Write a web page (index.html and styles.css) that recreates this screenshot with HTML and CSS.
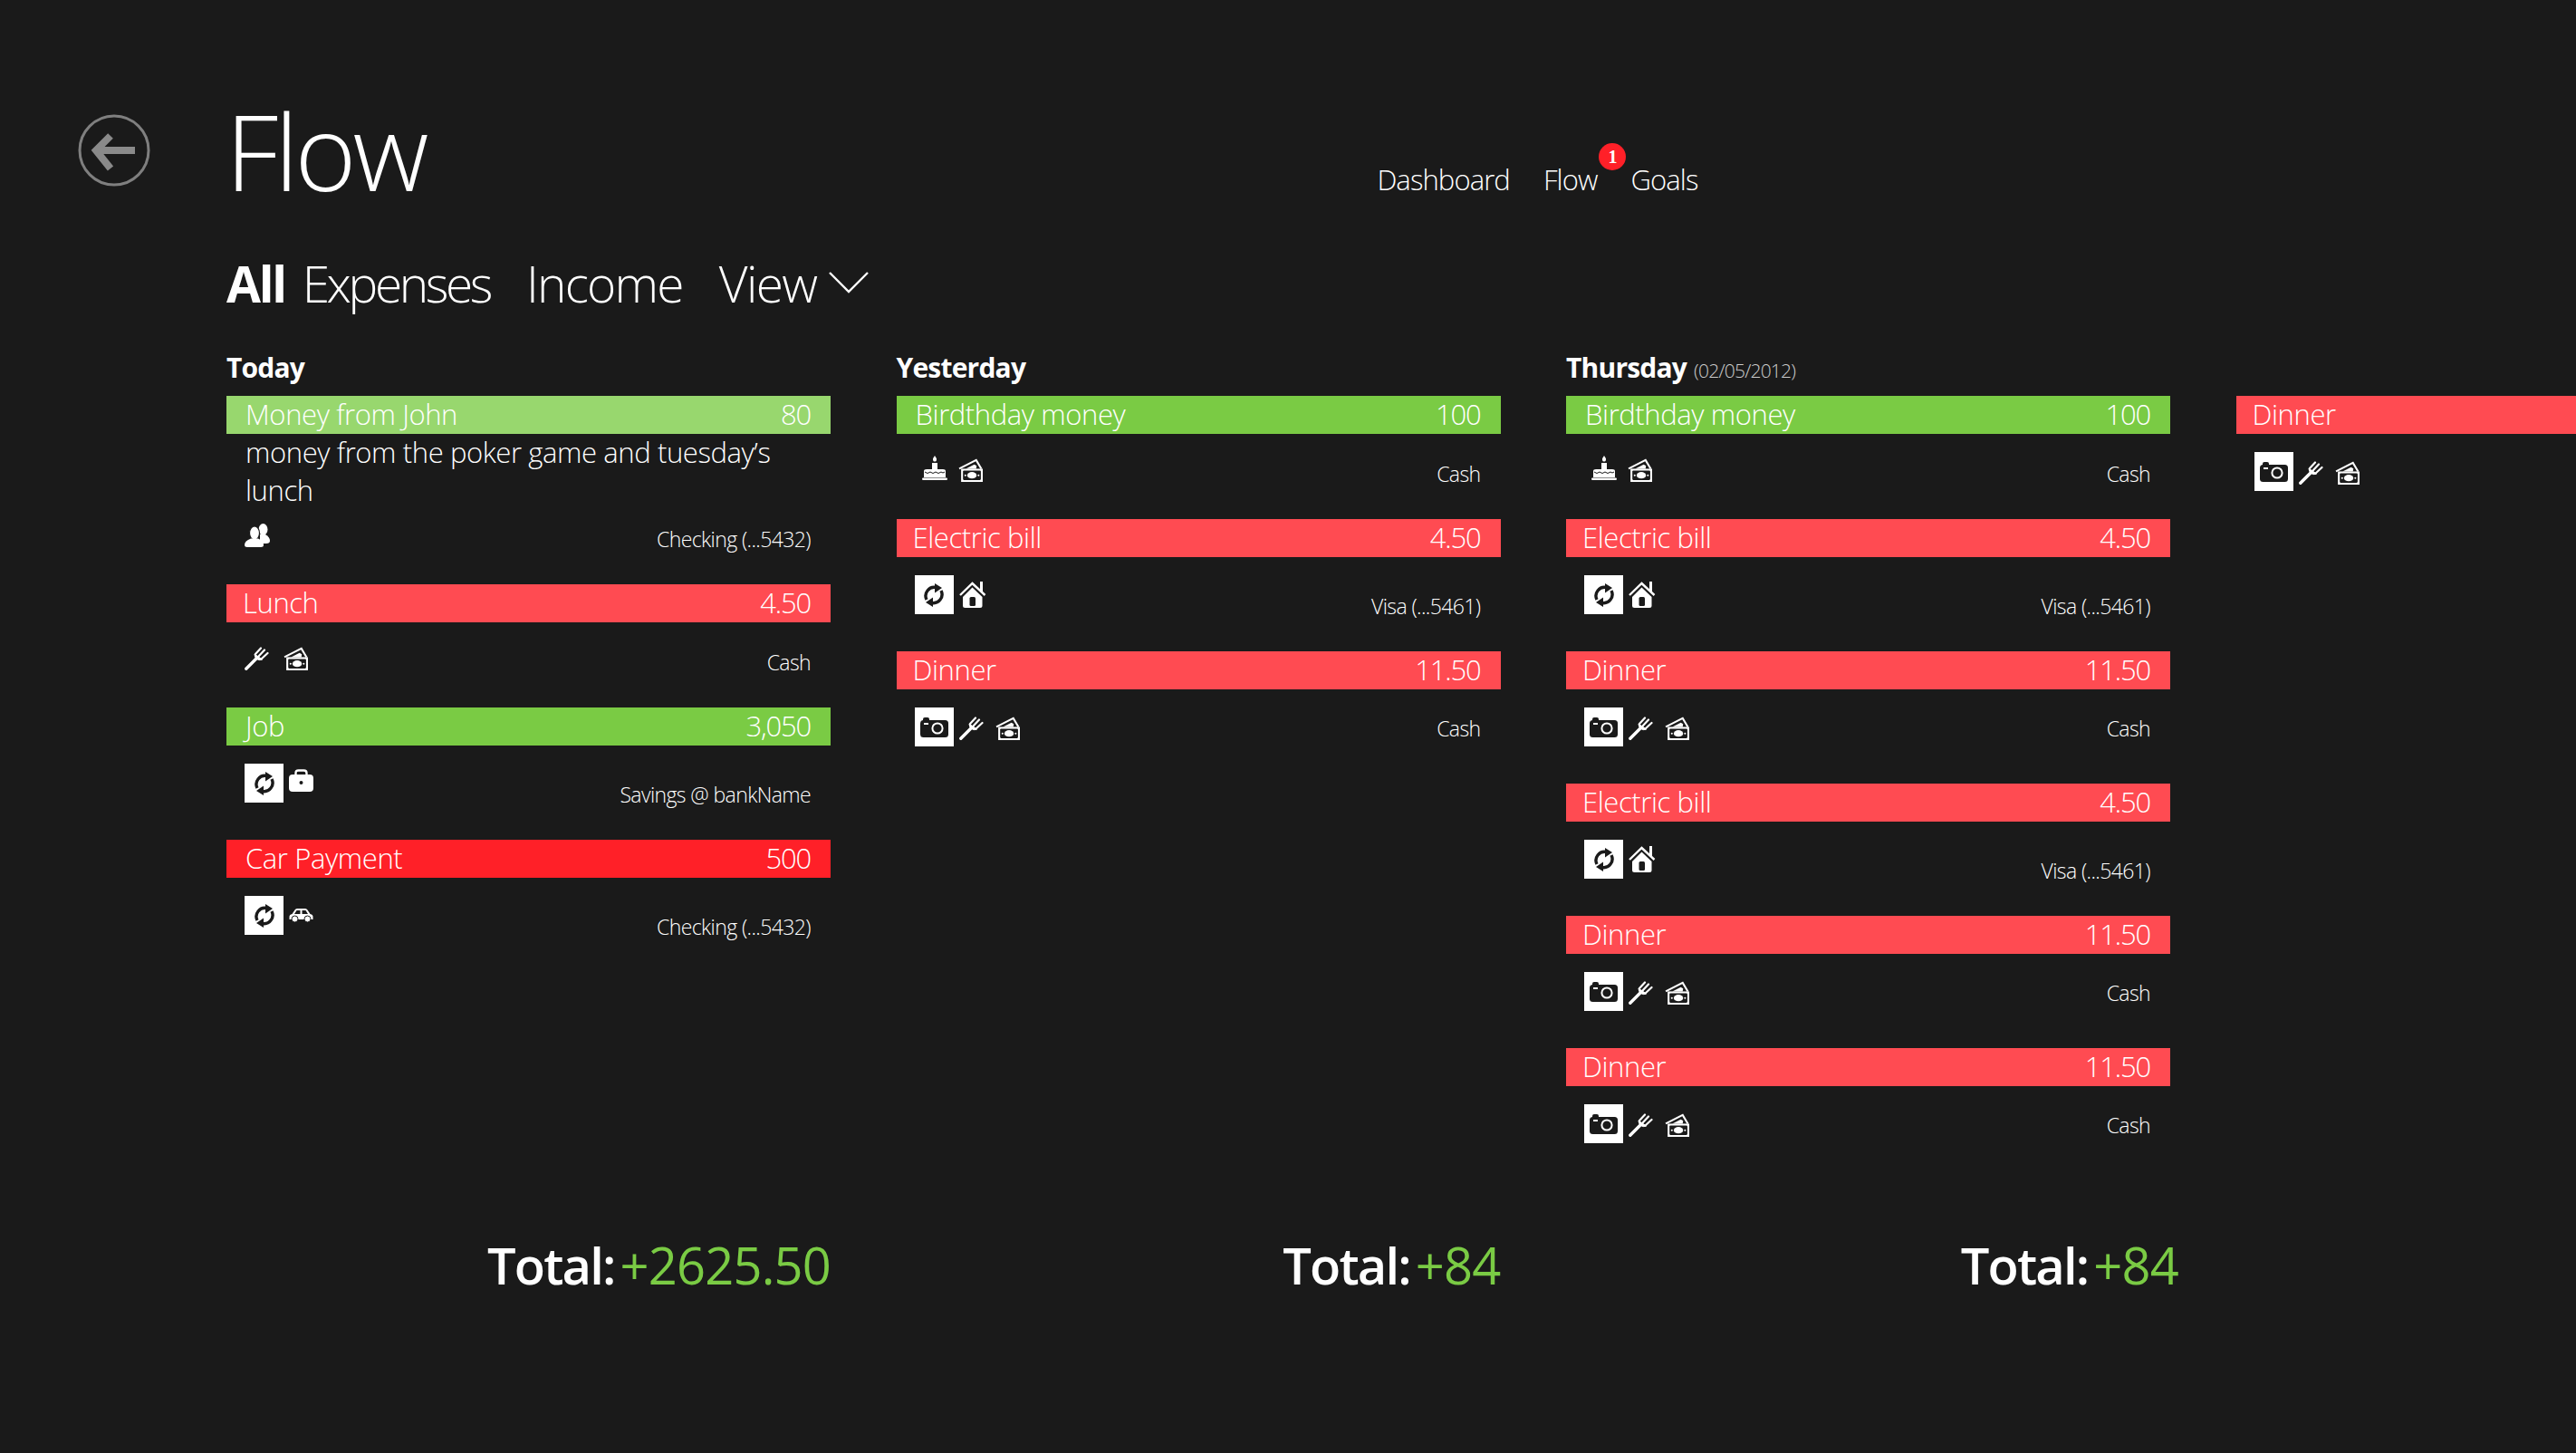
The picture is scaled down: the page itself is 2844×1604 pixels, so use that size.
FILE: index.html
```html
<!DOCTYPE html>
<html lang="en">
<head>
    <meta charset="UTF-8">
    <meta name="viewport" content="width=device-width, initial-scale=1.0">
    <title>Flow</title>
    <link rel="stylesheet" href="styles.css">
</head>
<body>

<!-- Icon set, reused through <use> -->
<svg class="icon-defs" xmlns="http://www.w3.org/2000/svg">
    <symbol id="i-fork" viewBox="0 0 27 26">
        <path d="M1.8 24.2 L14 12" fill="none" stroke="currentColor" stroke-width="3.4" stroke-linecap="round"/>
        <path d="M11 8 L19.5 14 Q16 15.5 13.5 13.5 Q11 11.5 11 8 Z" fill="currentColor" stroke="currentColor"/>
        <path d="M12 8 L18 1.5 M15.5 10.5 L22 3.5 M18.5 13.5 L25.5 7" fill="none" stroke="currentColor" stroke-width="2.2" stroke-linecap="round"/>
    </symbol>
    <symbol id="i-money" viewBox="0 0 26 25">
        <path d="M1 11 L19 1.8 L24.5 11" fill="none" stroke="currentColor" stroke-width="2"/>
        <path d="M8 11 L17 6.5 L19.5 8 L19 11 Z" fill="currentColor"/>
        <rect x="3" y="11" width="23" height="14" fill="currentColor"/>
        <rect x="5" y="13" width="19" height="10" rx="1" fill="#1a1a1a"/>
        <ellipse cx="14.5" cy="18" rx="5" ry="3.5" fill="currentColor"/>
        <circle cx="7.5" cy="18" r="1" fill="currentColor"/>
        <circle cx="21.5" cy="18" r="1" fill="currentColor"/>
    </symbol>
    <symbol id="i-refresh" viewBox="0 0 24 26">
        <path d="M4 18 A9.5 9.5 0 0 1 14.5 4.5" fill="none" stroke="currentColor" stroke-width="3.4"/>
        <path d="M20 8 A9.5 9.5 0 0 1 9.5 21.5" fill="none" stroke="currentColor" stroke-width="3.4"/>
        <path d="M13 0 L21 5 L13 10.5 Z M11 15.5 L3 21 L11 26 Z" fill="currentColor"/>
    </symbol>
    <symbol id="i-lock" viewBox="0 0 27 25">
        <path d="M7.5 7 V4.5 Q7.5 1.5 10.5 1.5 H16.5 Q19.5 1.5 19.5 4.5 V7" fill="none" stroke="currentColor" stroke-width="2.4"/>
        <rect x="0" y="6" width="27" height="19" rx="4" fill="currentColor"/>
        <circle cx="13.5" cy="15" r="2" fill="#1a1a1a"/>
    </symbol>
    <symbol id="i-car" viewBox="0 0 26 15">
        <path d="M0 9 Q0 6.5 3 6 L6 1.5 Q6.8 0 8.5 0 H17.5 Q19.2 0 20 1.5 L23 6 Q26 6.5 26 9 V12 H0 Z" fill="currentColor"/>
        <path d="M8 2 H12 V6 H5.5 Z M14 2 H18 L20.5 6 H14 Z" fill="#1a1a1a"/>
        <circle cx="6" cy="11.5" r="3.5" fill="currentColor" stroke="#1a1a1a"/>
        <circle cx="20" cy="11.5" r="3.5" fill="currentColor" stroke="#1a1a1a"/>
    </symbol>
    <symbol id="i-house" viewBox="0 0 30 29">
        <path d="M1 15 L14.5 2 L28.5 15" fill="none" stroke="currentColor" stroke-width="2.4"/>
        <rect x="23" y="0" width="3" height="11" fill="currentColor"/>
        <path d="M4 17 L14.5 6.5 L25.5 17 V26.5 Q25.5 29 23 29 H6.5 Q4 29 4 26.5 Z" fill="currentColor"/>
        <rect x="11.5" y="17" width="6.5" height="10" rx="1.5" fill="#1a1a1a"/>
    </symbol>
    <symbol id="i-cake" viewBox="0 0 28 27">
        <path d="M14 0 Q16.5 3 16 5 Q15.5 6.5 14 6.5 Q12.5 6.5 12 5 Q11.5 3 14 0 Z" fill="currentColor"/>
        <rect x="11" y="8" width="6" height="7.5" fill="currentColor"/>
        <path d="M2 17 Q2 15 5 15 H23 Q26 15 26 17 V24 H2 Z" fill="currentColor"/>
        <path d="M3 18 Q6 21 9 18 Q12 21 15 18 Q18 21 21 18 Q23 20 25 18" fill="none" stroke="#1a1a1a" stroke-width="1"/>
        <rect x="0" y="24.5" width="28" height="2.5" rx="1.2" fill="currentColor"/>
    </symbol>
    <symbol id="i-people" viewBox="0 0 28 26">
        <ellipse cx="20.5" cy="6.5" rx="5" ry="6.5" fill="currentColor"/>
        <path d="M17 12 H23 Q28 15 28 19 Q28 22 24 22 H17 Z" fill="currentColor"/>
        <ellipse cx="11" cy="10.5" rx="5.5" ry="7.5" fill="currentColor" stroke="#1a1a1a" stroke-width="1.2"/>
        <path d="M0 23.5 Q0 19 7 16.5 H15 Q21 19 21 23.5 Q21 26 18 26 H3 Q0 26 0 23.5 Z" fill="currentColor"/>
    </symbol>
    <symbol id="i-camera" viewBox="0 0 31 22">
        <rect x="3" y="0" width="7" height="6" rx="2" fill="currentColor"/>
        <rect x="0" y="3" width="31" height="19" rx="3.5" fill="currentColor"/>
        <rect x="4" y="6" width="5" height="2" fill="#fff"/>
        <circle cx="19" cy="12" r="5.6" fill="none" stroke="#fff" stroke-width="2"/>
    </symbol>
</svg>

<header class="top-bar">
    <a class="back-btn" href="#">
        <svg viewBox="0 0 80 80" width="80" height="80">
            <circle cx="40" cy="40" r="38" fill="none" stroke="#7f7f7f" stroke-width="3"/>
            <path d="M63 40 H24 M36 24 L20 40 L36 60" fill="none" stroke="#8a8a8a" stroke-width="8"/>
        </svg>
    </a>
    <h1 class="page-title">Flow</h1>
    <nav class="main-nav">
        <a href="#">Dashboard</a>
        <a href="#" class="has-badge">Flow<span class="badge">1</span></a>
        <a href="#">Goals</a>
    </nav>
</header>

<div class="filters">
    <span class="filter filter-active">All</span>
    <span class="filter filter-expenses">Expenses</span>
    <span class="filter filter-income">Income</span>
    <span class="filter filter-view">View</span>
    <svg class="chevron" viewBox="0 0 44 24" width="44" height="24"><path d="M1 1 L22 22 L43 1" fill="none" stroke="#fff" stroke-width="2.4"/></svg>
</div>

<main class="board">
    <!-- Today -->
    <section class="day">
        <h2 class="day-title">Today</h2>
        <article class="entry">
            <div class="bar income-light"><span>Money from John</span><span class="amount">80</span></div>
            <p class="note">money from the poker game and tuesday’s lunch</p>
            <div class="details after-note">
                <svg class="icon people"><use href="#i-people"/></svg>
                <span class="account">Checking (...5432)</span>
            </div>
        </article>
        <article class="entry">
            <div class="bar expense tight"><span>Lunch</span><span class="amount">4.50</span></div>
            <div class="details">
                <svg class="icon"><use href="#i-fork"/></svg>
                <svg class="icon money"><use href="#i-money"/></svg>
                <span class="account">Cash</span>
            </div>
        </article>
        <article class="entry">
            <div class="bar income"><span>Job</span><span class="amount">3,050</span></div>
            <div class="details tall">
                <span class="tile"><svg class="glyph-refresh"><use href="#i-refresh"/></svg></span>
                <svg class="icon lock"><use href="#i-lock"/></svg>
                <span class="account">Savings @ bankName</span>
            </div>
        </article>
        <article class="entry">
            <div class="bar expense-strong"><span>Car Payment</span><span class="amount">500</span></div>
            <div class="details tall">
                <span class="tile"><svg class="glyph-refresh"><use href="#i-refresh"/></svg></span>
                <svg class="icon car"><use href="#i-car"/></svg>
                <span class="account">Checking (...5432)</span>
            </div>
        </article>
    </section>

    <!-- Yesterday -->
    <section class="day">
        <h2 class="day-title">Yesterday</h2>
        <article class="entry">
            <div class="bar income"><span>Birdthday money</span><span class="amount">100</span></div>
            <div class="details">
                <svg class="icon cake"><use href="#i-cake"/></svg>
                <svg class="icon money"><use href="#i-money"/></svg>
                <span class="account">Cash</span>
            </div>
        </article>
        <article class="entry">
            <div class="bar expense tight"><span>Electric bill</span><span class="amount">4.50</span></div>
            <div class="details tall">
                <span class="tile"><svg class="glyph-refresh"><use href="#i-refresh"/></svg></span>
                <svg class="icon house"><use href="#i-house"/></svg>
                <span class="account">Visa (...5461)</span>
            </div>
        </article>
        <article class="entry">
            <div class="bar expense tight"><span>Dinner</span><span class="amount">11.50</span></div>
            <div class="details tall">
                <span class="tile"><svg class="glyph-camera"><use href="#i-camera"/></svg></span>
                <svg class="icon fork"><use href="#i-fork"/></svg>
                <svg class="icon money"><use href="#i-money"/></svg>
                <span class="account">Cash</span>
            </div>
        </article>
    </section>

    <!-- Thursday -->
    <section class="day">
        <h2 class="day-title">Thursday <small>(02/05/2012)</small></h2>
        <article class="entry">
            <div class="bar income"><span>Birdthday money</span><span class="amount">100</span></div>
            <div class="details">
                <svg class="icon cake"><use href="#i-cake"/></svg>
                <svg class="icon money"><use href="#i-money"/></svg>
                <span class="account">Cash</span>
            </div>
        </article>
        <article class="entry">
            <div class="bar expense tight"><span>Electric bill</span><span class="amount">4.50</span></div>
            <div class="details tall">
                <span class="tile"><svg class="glyph-refresh"><use href="#i-refresh"/></svg></span>
                <svg class="icon house"><use href="#i-house"/></svg>
                <span class="account">Visa (...5461)</span>
            </div>
        </article>
        <article class="entry">
            <div class="bar expense tight"><span>Dinner</span><span class="amount">11.50</span></div>
            <div class="details tall">
                <span class="tile"><svg class="glyph-camera"><use href="#i-camera"/></svg></span>
                <svg class="icon fork"><use href="#i-fork"/></svg>
                <svg class="icon money"><use href="#i-money"/></svg>
                <span class="account">Cash</span>
            </div>
        </article>
        <article class="entry">
            <div class="bar expense tight"><span>Electric bill</span><span class="amount">4.50</span></div>
            <div class="details tall">
                <span class="tile"><svg class="glyph-refresh"><use href="#i-refresh"/></svg></span>
                <svg class="icon house"><use href="#i-house"/></svg>
                <span class="account">Visa (...5461)</span>
            </div>
        </article>
        <article class="entry">
            <div class="bar expense tight"><span>Dinner</span><span class="amount">11.50</span></div>
            <div class="details tall">
                <span class="tile"><svg class="glyph-camera"><use href="#i-camera"/></svg></span>
                <svg class="icon fork"><use href="#i-fork"/></svg>
                <svg class="icon money"><use href="#i-money"/></svg>
                <span class="account">Cash</span>
            </div>
        </article>
        <article class="entry">
            <div class="bar expense tight"><span>Dinner</span><span class="amount">11.50</span></div>
            <div class="details tall">
                <span class="tile"><svg class="glyph-camera"><use href="#i-camera"/></svg></span>
                <svg class="icon fork"><use href="#i-fork"/></svg>
                <svg class="icon money"><use href="#i-money"/></svg>
                <span class="account">Cash</span>
            </div>
        </article>
    </section>

    <!-- Next day, cut off by the window -->
    <section class="day">
        <div class="day-title">&nbsp;</div>
        <article class="entry">
            <div class="bar expense tight"><span>Dinner</span></div>
            <div class="details tall">
                <span class="tile"><svg class="glyph-camera"><use href="#i-camera"/></svg></span>
                <svg class="icon fork"><use href="#i-fork"/></svg>
                <svg class="icon money"><use href="#i-money"/></svg>
            </div>
        </article>
    </section>

    <div class="total">Total:<span class="total-value">+2625.50</span></div>
    <div class="total">Total:<span class="total-value">+84</span></div>
    <div class="total total-over">Total:<span class="total-value">+84</span></div>
</main>

</body>
</html>
```

FILE: styles.css
```css
html, body {
    height: 100%;
}

body {
    margin: 0;
    overflow: hidden;
    background-color: #1a1a1a;
    color: #ffffff;
    font-family: "Open Sans", "Noto Sans", sans-serif;
    font-weight: 300;
}

a {
    color: inherit;
    text-decoration: none;
}

.icon-defs {
    display: none;
}

/* Header */
.top-bar {
    display: flex;
    align-items: flex-start;
    height: 275px;
    padding-left: 86px;
}

.back-btn {
    display: block;
    width: 80px;
    height: 80px;
    margin-top: 126px;
}

.page-title {
    margin: 91px 0 0 83px;
    font-size: 116px;
    font-weight: 300;
    line-height: 150px;
    letter-spacing: -4px;
}

.main-nav {
    display: flex;
    gap: 37px;
    margin: 176px 0 0 1051px;
    font-size: 31px;
    line-height: 44px;
    letter-spacing: -0.9px;
}

.has-badge {
    position: relative;
}

.badge {
    position: absolute;
    top: -18px;
    right: -32px;
    width: 30px;
    height: 30px;
    border-radius: 50%;
    background-color: #ff2028;
    font-family: "Liberation Serif", serif;
    font-size: 20px;
    font-weight: 700;
    line-height: 30px;
    text-align: center;
    letter-spacing: 0;
}

/* Filters */
.filters {
    display: flex;
    align-items: baseline;
    height: 65px;
    padding-left: 250px;
    font-size: 55px;
    line-height: 76px;
    letter-spacing: -2.3px;
}

.filter {
    margin-right: 40px;
}

.filter-active {
    margin-right: 19px;
    font-weight: 700;
}

.filter-expenses {
    letter-spacing: -3.4px;
}

.filter-income {
    letter-spacing: -1.8px;
}

.filter-view {
    letter-spacing: -1.6px;
}

.chevron {
    margin-left: -27px;
    align-self: center;
    margin-top: 8px;
}

/* Columns */
.board {
    display: grid;
    grid-template-columns: repeat(4, 667px);
    grid-template-rows: 974px auto;
    column-gap: 72.5px;
    padding-left: 250px;
    margin-top: 44px;
}

.day-title {
    height: 44px;
    margin: 0 0 9px;
    font-size: 30px;
    font-weight: 700;
    line-height: 44px;
    letter-spacing: -0.8px;
}

.day-title small {
    margin-left: 1px;
    font-size: 21px;
    font-weight: 300;
    color: #cccccc;
    letter-spacing: -0.8px;
}

.entry {
    margin-bottom: 41px;
}

.bar {
    display: flex;
    justify-content: space-between;
    height: 42px;
    padding: 0 22px 0 21px;
    font-size: 31px;
    line-height: 40px;
    letter-spacing: -0.4px;
}

.bar.tight {
    padding-left: 18px;
}

.amount {
    letter-spacing: -1.2px;
}

.income {
    background-color: #7acb44;
}

.income-light {
    background-color: #98d76e;
}

.expense {
    background-color: #ff4b52;
}

.expense-strong {
    background-color: #ff2028;
}

.note {
    margin: -1px 0 9px;
    padding: 0 22px 0 21px;
    font-size: 31px;
    line-height: 42px;
    letter-spacing: -0.4px;
}

/* Icon row under a bar */
.details {
    display: flex;
    align-items: flex-start;
    height: 33px;
    margin-top: 20px;
    padding: 0 22px 0 20px;
}

.note + .details {
    margin-top: 0;
}

.details.tall {
    height: 43px;
}

.account {
    align-self: flex-end;
    margin-bottom: -6px;
    margin-left: auto;
    font-size: 23px;
    line-height: 30px;
    letter-spacing: -0.6px;
}

/* Cash lines on a row with a camera tile sit higher */
.fork ~ .account {
    margin-bottom: 5px;
}

.icon {
    flex: none;
    width: 27px;
    height: 26px;
    margin-top: 7px;
    color: #ffffff;
}

.icon.money {
    margin-left: 16px;
}

.icon.cake {
    width: 28px;
    height: 27px;
    margin: 4px -4px 0 8px;
}

.icon.people {
    width: 28px;
    height: 26px;
    margin-top: 7px;
}

.tile {
    flex: none;
    display: flex;
    align-items: center;
    justify-content: center;
    width: 43px;
    height: 43px;
    background-color: #ffffff;
    color: #1a1a1a;
}

.glyph-refresh {
    width: 24px;
    height: 26px;
}

.glyph-camera {
    width: 31px;
    height: 22px;
}

.tile + .icon {
    margin-top: 10px;
    margin-left: 6px;
}

.icon.lock {
    height: 25px;
    margin-top: 6px;
}

.icon.car {
    height: 15px;
    margin-top: 14px;
}

.icon.house {
    width: 30px;
    height: 29px;
    margin-top: 7px;
}

.fork + .money {
    margin-top: 10px;
    margin-left: 13px;
}

/* Totals */
.total {
    font-size: 56px;
    font-weight: 600;
    line-height: 76px;
    text-align: right;
    letter-spacing: -1.8px;
    white-space: nowrap;
}

.total-value {
    margin-left: 6px;
    font-weight: 400;
    color: #7acb44;
    letter-spacing: -0.8px;
}

.total-over {
    margin-right: -9px;
}
```
